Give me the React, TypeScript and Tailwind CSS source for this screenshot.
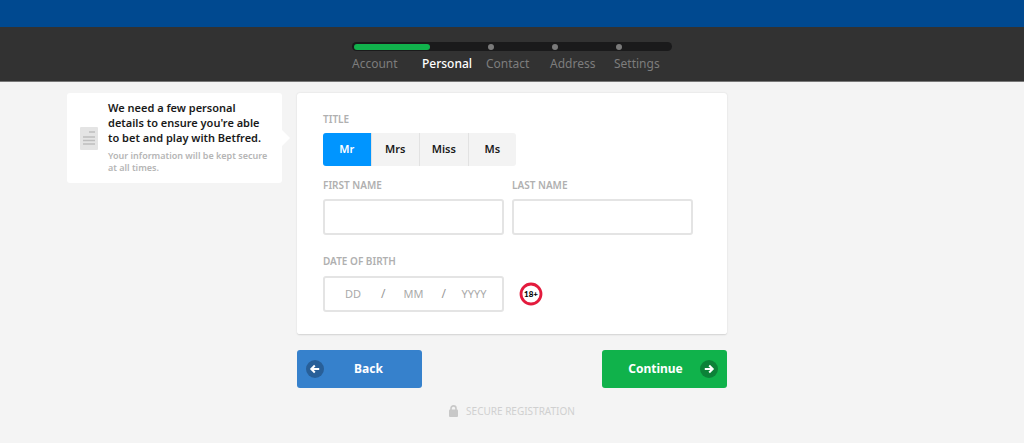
import { useState } from "react";

const steps = [
  { name: "Account", width: "w-[70px]" },
  { name: "Personal", width: "w-16" },
  { name: "Contact", width: "w-16" },
  { name: "Address", width: "w-16" },
  { name: "Settings", width: "w-12" },
];

const titles = ["Mr", "Mrs", "Miss", "Ms"];

const labelClass = "block text-[10px] leading-4 font-semibold uppercase text-[#b0b0b0]";
const boxClass = "h-9 w-full rounded-[3px] border-2 border-[#e4e4e4] bg-white";
const dateClass =
  "min-w-0 flex-1 bg-transparent text-center text-[11px] outline-none placeholder:text-[#aaaaaa]";

function Progress() {
  return (
    <div className="mx-auto w-80 pt-[15px]">
      <div className="flex h-[9px] items-center rounded-full bg-[#1a1a1b] px-0.5">
        <div className="h-[6px] w-[76px] rounded-full bg-[#11b24c]" />
        <div className="ml-[58px] flex gap-[58px]">
          {steps.slice(2).map((step) => (
            <span key={step.name} className="size-[6px] rounded-full bg-[#7a7a7a]" />
          ))}
        </div>
      </div>
      <ol className="mt-[5px] flex text-xs leading-4">
        {steps.map((step) => (
          <li
            key={step.name}
            aria-current={step.name === "Personal" ? "step" : undefined}
            className={`${step.width} ${
              step.name === "Personal" ? "font-medium text-white" : "text-[#7d7d7d]"
            }`}
          >
            {step.name}
          </li>
        ))}
      </ol>
    </div>
  );
}

function DocumentIcon() {
  return (
    <svg className="h-[23px] w-[18px] shrink-0" viewBox="0 0 18 23" aria-hidden="true">
      <rect width="18" height="23" rx="1" fill="#e4e4e4" />
      <path d="M9 5h6M3 10h12M3 13.5h12M3 17h12" stroke="#bdbdbd" strokeWidth="1.6" />
    </svg>
  );
}

function ArrowIcon({ back = false }: { back?: boolean }) {
  return (
    <svg
      className={`size-[18px] shrink-0 ${back ? "text-[#285f98]" : "text-[#0c8238]"}`}
      viewBox="0 0 18 18"
      aria-hidden="true"
    >
      <circle cx="9" cy="9" r="9" fill="currentColor" />
      <path
        d={back ? "M13.2 9H5.7M8.8 5.5L5.3 9l3.5 3.5" : "M4.8 9h7.5M9.2 5.5L12.7 9l-3.5 3.5"}
        fill="none"
        stroke="#fff"
        strokeWidth="2"
      />
    </svg>
  );
}

function AgeBadge() {
  return (
    <svg className="size-6 shrink-0" viewBox="0 0 24 24" role="img" aria-label="18 and over">
      <circle cx="12" cy="12" r="10" fill="#fff" stroke="#e31b3d" strokeWidth="2.8" />
      <text
        x="12"
        y="15"
        textAnchor="middle"
        fontSize="8"
        fontWeight="900"
        fontFamily="Lato, sans-serif"
        fill="#000"
      >
        18+
      </text>
    </svg>
  );
}

export default function App() {
  const [title, setTitle] = useState("Mr");

  return (
    <div className="min-h-screen bg-[#f4f4f4] font-['Noto_Sans',sans-serif] text-[#1a1a1a]">
      {/* HEADER */}
      <header>
        <div className="h-[27px] bg-[#004990]" />
        <div className="h-[55px] border-b border-[#777777] bg-[#323232]">
          <Progress />
        </div>
      </header>

      <main className="grid grid-cols-[1fr_430px_1fr] items-start gap-x-[15px] pt-[11px]">
        {/* INFO */}
        <aside className="relative flex w-[215px] items-center gap-[10px] justify-self-end rounded-[3px] bg-white py-[7px] pr-3 pl-[13px]">
          <DocumentIcon />
          <div>
            <p className="text-[11px] leading-[15px] font-semibold">
              We need a few personal details to ensure you're able to bet and play with Betfred.
            </p>
            <p className="mt-[5px] mb-[2px] text-[9px] leading-3 font-semibold text-[#b5b5b5]">
              Your information will be kept secure at all times.
            </p>
          </div>
          <svg
            className="absolute top-[37px] -right-2 h-4 w-2"
            viewBox="0 0 8 16"
            aria-hidden="true"
          >
            <path d="M0 0l8 8-8 8z" fill="#fff" />
          </svg>
        </aside>

        <form onSubmit={(e) => e.preventDefault()}>
          <div className="rounded-[3px] border-b border-[#d9d9d9] bg-white px-[26px] pt-[18px] pb-[22px] shadow-[0_0_2px_rgba(0,0,0,0.12)]">
            {/* TITLE */}
            <fieldset>
              <legend className={labelClass}>Title</legend>
              <div className="mt-[6px] flex h-[33px] w-[193px] overflow-hidden rounded-[3px] bg-[#f3f3f3]">
                {titles.map((name) => (
                  <label
                    key={name}
                    className="flex flex-1 items-center justify-center border-l border-[#e2e2e2] text-[11px] font-semibold first:border-l-0 has-checked:bg-[#0095ff] has-checked:text-white"
                  >
                    <input
                      type="radio"
                      name="title"
                      value={name}
                      checked={title === name}
                      onChange={() => setTitle(name)}
                      className="sr-only"
                    />
                    {name}
                  </label>
                ))}
              </div>
            </fieldset>

            {/* NAME */}
            <div className="mt-[11px] mr-2 grid grid-cols-2 gap-2">
              <div>
                <label htmlFor="firstName" className={labelClass}>
                  First name
                </label>
                <input id="firstName" type="text" className={`${boxClass} mt-[6px] px-2 text-xs`} />
              </div>
              <div>
                <label htmlFor="lastName" className={labelClass}>
                  Last name
                </label>
                <input id="lastName" type="text" className={`${boxClass} mt-[6px] px-2 text-xs`} />
              </div>
            </div>

            {/* DATE OF BIRTH */}
            <div className="mt-[18px] mr-2 grid grid-cols-2 gap-x-2">
              <label htmlFor="day" className={`${labelClass} col-span-2`}>
                Date of birth
              </label>
              <div className={`${boxClass} mt-[7px] flex items-center text-xs text-[#999999]`}>
                <input id="day" aria-label="Day" placeholder="DD" className={dateClass} />
                <span>/</span>
                <input aria-label="Month" placeholder="MM" className={dateClass} />
                <span>/</span>
                <input aria-label="Year" placeholder="YYYY" className={dateClass} />
              </div>
              <div className="mt-[7px] flex items-center pl-[7px]">
                <AgeBadge />
              </div>
            </div>
          </div>

          {/* ACTIONS */}
          <div className="mt-[15px] flex justify-between text-xs font-bold text-white">
            <button
              type="button"
              className="flex h-[38px] w-[125px] items-center rounded-[3px] bg-[#3681cc] px-[9px]"
            >
              <ArrowIcon back />
              <span className="flex-1">Back</span>
            </button>
            <button
              type="submit"
              className="flex h-[38px] w-[125px] items-center rounded-[3px] bg-[#10b24b] px-[9px]"
            >
              <span className="flex-1">Continue</span>
              <ArrowIcon />
            </button>
          </div>

          <p className="mt-[15px] flex items-center justify-center gap-2 text-[10px] leading-4 text-[#d0d0d0] uppercase">
            <svg className="h-3 w-[9px]" viewBox="0 0 9 12" aria-hidden="true">
              <rect y="4.5" width="9" height="7.5" rx="1" fill="#c8c8c8" />
              <path d="M2 6V3.4a2.5 2.5 0 015 0V6" fill="none" stroke="#c8c8c8" strokeWidth="1.6" />
            </svg>
            Secure registration
          </p>
        </form>
      </main>
    </div>
  );
}
